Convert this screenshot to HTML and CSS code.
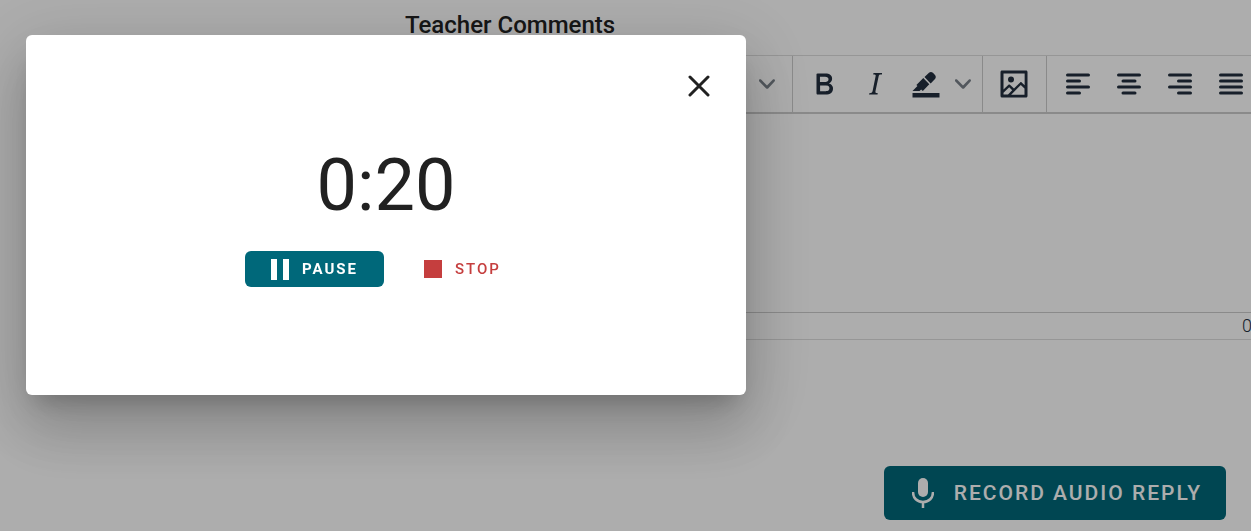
FILE: index.html
```html
<!DOCTYPE html>
<html lang="en">
<head>
    <meta charset="UTF-8">
    <meta name="viewport" content="width=device-width, initial-scale=1.0">
    <title>Teacher Comments</title>
    <link rel="stylesheet" href="styles.css">
</head>
<body>

    <main class="page">
        <h2 class="title">Teacher Comments</h2>

        <div class="editor">
            <div class="toolbar">
                <div class="group group-styles">
                    <button class="tool tool-styles" aria-label="Styles">
                        <svg class="chevron" viewBox="0 0 10 10"><path d="M8.7 2.2c.3-.3.8-.3 1 0 .4.4.4.9 0 1.2L5.7 7.8c-.3.3-.9.3-1.2 0L.2 3.4a.8.8 0 0 1 0-1.2c.3-.3.8-.3 1.1 0L5 6l3.7-3.8Z"/></svg>
                    </button>
                </div>
                <div class="group">
                    <button class="tool" aria-label="Bold">
                        <svg class="icon" viewBox="0 0 24 24"><path fill-rule="evenodd" d="M7.8 19c-.3 0-.5 0-.6-.2l-.2-.5V5.7c0-.2 0-.4.2-.5l.6-.2h5c1.5 0 2.7.3 3.5 1 .7.6 1.1 1.4 1.1 2.5a3 3 0 0 1-.6 1.9c-.4.6-1 1-1.6 1.2.4.1.9.3 1.3.6s.8.7 1 1.2c.4.4.5 1 .5 1.6 0 1.3-.4 2.3-1.3 3-.8.7-2.1 1-3.8 1H7.8Zm5-8.3c.6 0 1.2-.1 1.6-.5.4-.3.6-.7.6-1.3 0-1.1-.8-1.7-2.3-1.7H9.3v3.5h3.4Zm.5 6c.7 0 1.3-.1 1.7-.4.4-.4.6-.9.6-1.5s-.2-1-.7-1.4c-.4-.3-1-.4-2-.4H9.4v3.8h4Z"/></svg>
                    </button>
                    <button class="tool" aria-label="Italic">
                        <svg class="icon" viewBox="0 0 24 24"><path fill-rule="evenodd" d="m16.7 4.7-.1.9h-.3c-.6 0-1 0-1.4.3-.3.3-.4.6-.5 1.1l-2.1 9.8v.6c0 .5.4.8 1.4.8h.2l-.2.8H8l.2-.8h.2c1.1 0 1.8-.5 2-1.5l2-9.8.1-.5c0-.6-.4-.8-1.4-.8h-.3l.2-.9h5.8Z"/></svg>
                    </button>
                    <button class="tool" aria-label="Highlight color">
                        <svg class="icon" viewBox="0 0 24 24"><path d="M3 18h18v3H3z"/><path fill-rule="evenodd" d="M7.7 16.7H3l3.3-3.3-.7-.8L10.2 8l4 4.1-4 4.2c-.2.2-.6.2-.8 0l-.6-.7-1.1 1.1zm5-7.5L11 7.4l3-2.9a2 2 0 0 1 2.6 0L18 6c.7.7.7 2 0 2.7l-2.9 2.9-1.8-1.8-.5-.6"/></svg>
                    </button>
                    <button class="tool tool-split" aria-label="Choose highlight color">
                        <svg class="chevron" viewBox="0 0 10 10"><path d="M8.7 2.2c.3-.3.8-.3 1 0 .4.4.4.9 0 1.2L5.7 7.8c-.3.3-.9.3-1.2 0L.2 3.4a.8.8 0 0 1 0-1.2c.3-.3.8-.3 1.1 0L5 6l3.7-3.8Z"/></svg>
                    </button>
                </div>
                <div class="group">
                    <button class="tool" aria-label="Insert image">
                        <svg class="icon" viewBox="0 0 24 24"><path fill-rule="evenodd" d="m5 15.7 3.3-3.2c.3-.3.7-.3 1 0L12 15l4.1-4c.3-.4.8-.4 1 0l2 1.9V5H5v10.7ZM5 18V19h3l2.8-2.9-2-2L5 17.9Zm14-3-2.5-2.4-6.4 6.5H19v-4ZM4 3h16c.6 0 1 .4 1 1v16c0 .6-.4 1-1 1H4a1 1 0 0 1-1-1V4c0-.6.4-1 1-1Zm6 8a2 2 0 1 0 0-4 2 2 0 0 0 0 4Z"/></svg>
                    </button>
                </div>
                <div class="group">
                    <button class="tool" aria-label="Align left">
                        <svg class="icon lines" viewBox="0 0 24 24"><path d="M5 6h14M5 10h8M5 14h14M5 18h8"/></svg>
                    </button>
                    <button class="tool" aria-label="Align center">
                        <svg class="icon lines" viewBox="0 0 24 24"><path d="M5 6h14M8 10h8M5 14h14M8 18h8"/></svg>
                    </button>
                    <button class="tool" aria-label="Align right">
                        <svg class="icon lines" viewBox="0 0 24 24"><path d="M5 6h14M11 10h8M5 14h14M11 18h8"/></svg>
                    </button>
                    <button class="tool" aria-label="Justify">
                        <svg class="icon lines" viewBox="0 0 24 24"><path d="M5 6h14M5 10h14M5 14h14M5 18h14"/></svg>
                    </button>
                </div>
            </div>
            <textarea class="comment" aria-label="Teacher Comments"></textarea>
            <div class="statusbar">0</div>
        </div>

        <div class="actions">
            <button class="btn btn-record">
                <svg class="mic" viewBox="0 0 22 30"><rect x="6" y="0" width="10" height="19" rx="5"/><path class="stroke" d="M1 14c0 6 4 10 10 10s10-4 10-10M11 24v6"/></svg>
                Record Audio Reply
            </button>
        </div>
    </main>

    <!-- Recording dialog -->
    <div class="overlay">
        <div class="dialog" role="dialog" aria-modal="true" aria-label="Audio recorder">
            <button class="close" aria-label="Close">
                <svg viewBox="0 0 22 22"><path d="M2 2l18 18M20 2L2 20"/></svg>
            </button>
            <div class="timer">0:20</div>
            <div class="controls">
                <button class="btn btn-pause">
                    <svg class="pause-icon" viewBox="0 0 18 21"><path d="M0 0h6v21H0zM12 0h6v21h-6z"/></svg>
                    Pause
                </button>
                <button class="btn btn-stop">
                    <svg class="stop-icon" viewBox="0 0 18 18"><path d="M0 0h18v18H0z"/></svg>
                    Stop
                </button>
            </div>
        </div>
    </div>

</body>
</html>
```
FILE: styles.css
```css
* {
    box-sizing: border-box;
}
body {
    margin: 0;
    font-family: Roboto, sans-serif;
    color: #212121;
    background-color: #fff;
    overflow: hidden;
}
button {
    margin: 0;
    padding: 0;
    border: none;
    background: none;
    font-family: inherit;
    cursor: pointer;
}
svg {
    display: block;
    flex: none;
    fill: currentColor;
}
.page {
    padding-left: 405px;
}
.title {
    margin: 0;
    padding: 9px 0 14px;
    font-size: 24px;
    line-height: 32px;
    font-weight: 500;
}

/* Editor */
.editor {
    border-top: 1px solid #ddd;
    border-bottom: 1px solid #ddd;
}
.toolbar {
    display: flex;
    border-bottom: 2px solid #ccc;
}
.group {
    display: flex;
    flex: none;
    padding: 2px 7px 3px 5px;
    border-right: 1px solid #ccc;
}
.group:last-child {
    border-right: none;
}
.group-styles {
    width: 388px;
}
.tool {
    display: flex;
    align-items: center;
    justify-content: center;
    width: 51px;
    height: 51px;
    color: #222f3e;
}
.tool-styles {
    width: 100%;
    justify-content: flex-end;
    padding-right: 10px;
}
.tool-split {
    width: 24px;
}
.icon {
    width: 36px;
    height: 36px;
}
.lines {
    fill: none;
    stroke: currentColor;
    stroke-width: 2;
    stroke-linecap: round;
}
.chevron {
    width: 16px;
    height: 16px;
    opacity: 0.6;
}
.comment {
    display: block;
    width: 100%;
    height: 198px;
    padding: 16px;
    border: none;
    outline: none;
    resize: none;
    font: inherit;
}
.statusbar {
    padding: 0 0 0 837px;
    border-top: 1px solid #ccc;
    font-size: 18px;
    line-height: 26px;
    font-weight: 300;
    color: #222f3e;
}

/* Buttons */
.btn {
    display: flex;
    align-items: center;
    border-radius: 6px;
    font-weight: 500;
    text-transform: uppercase;
}
.actions {
    display: flex;
    justify-content: flex-end;
    padding: 126px 25px 11px;
}
.btn-record {
    gap: 20px;
    height: 54px;
    padding: 0 24px 0 28px;
    background-color: #00687a;
    color: #fff;
    font-size: 21px;
    letter-spacing: 2px;
}
.mic {
    width: 22px;
    height: 30px;
}
.mic .stroke {
    fill: none;
    stroke: currentColor;
    stroke-width: 2.5;
}

/* Dialog */
.overlay {
    position: fixed;
    inset: 0;
    padding: 35px 26px;
    background-color: rgba(0, 0, 0, 0.32);
}
.dialog {
    display: flex;
    flex-direction: column;
    max-width: 720px;
    min-height: 360px;
    padding: 36px;
    background-color: #fff;
    border-radius: 6px;
    box-shadow: 0 16px 22px -10px rgba(0, 0, 0, 0.2),
                0 36px 57px 4px rgba(0, 0, 0, 0.14),
                0 14px 69px 12px rgba(0, 0, 0, 0.12);
}
.close {
    align-self: flex-end;
    padding: 4px 0;
    color: #212121;
}
.close svg {
    width: 22px;
    height: 22px;
    stroke: currentColor;
    stroke-width: 3;
    stroke-linecap: round;
}
.timer {
    padding: 46px 0 26px;
    font-size: 72px;
    line-height: 78px;
    text-align: center;
}
.controls {
    display: flex;
    justify-content: center;
    gap: 14px;
}
.controls .btn {
    gap: 13px;
    height: 36px;
    padding: 0 26px;
    font-size: 15px;
    letter-spacing: 2px;
}
.controls .btn-pause {
    background-color: #00687a;
    color: #fff;
    font-weight: 700;
}
.controls .btn-stop {
    color: #c53e3e;
}
.pause-icon {
    width: 18px;
    height: 21px;
}
.stop-icon {
    width: 18px;
    height: 18px;
}
```
